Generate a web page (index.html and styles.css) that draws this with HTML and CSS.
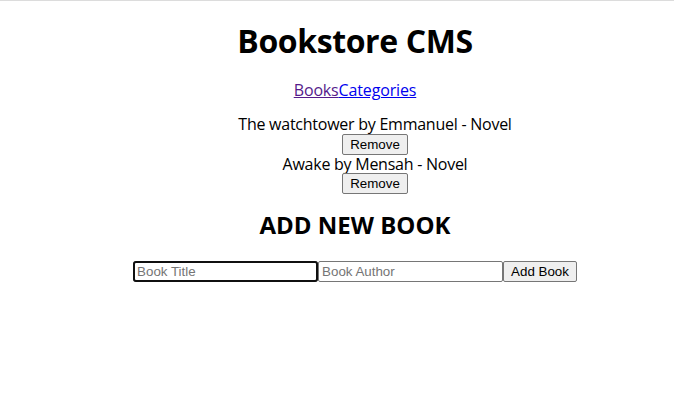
FILE: index.html
```html
<!DOCTYPE html>
<html lang="en">
<head>
<meta charset="utf-8">
<title>Bookstore CMS</title>
<link rel="stylesheet" href="styles.css">
</head>
<body>
<div class="app">
  <h1 class="title">Bookstore CMS</h1>
  <nav class="nav"><a class="nav-link visited" href="#books">Books</a><a class="nav-link" href="#categories">Categories</a></nav>
  <ul class="book-list">
    <li class="book">
      <span class="book-text">The watchtower by Emmanuel - Novel</span>
      <button class="btn" type="button">Remove</button>
    </li>
    <li class="book">
      <span class="book-text">Awake by Mensah - Novel</span>
      <button class="btn" type="button">Remove</button>
    </li>
  </ul>
  <h2 class="form-title">ADD NEW BOOK</h2>
  <form class="add-form"><input class="field" type="text" placeholder="Book Title" autofocus><input class="field" type="text" placeholder="Book Author"><button class="btn" type="submit">Add Book</button></form>
</div>
</body>
</html>
```

FILE: styles.css
```css
html {
  border-top: 1px solid #dcdcdc;
}

body {
  margin: 8px;
  font-family: "Open Sans", "Noto Sans", sans-serif;
  font-size: 16px;
  line-height: 1.15;
  color: #000;
  background: #fff;
}

.app {
  padding-left: 36px;
  text-align: center;
}

.title {
  font-size: 32px;
  font-weight: 700;
  letter-spacing: -0.4px;
  margin: 14px 0 21px;
}

.nav {
  letter-spacing: -0.15px;
}

.nav-link {
  color: #0000ee;
}

.nav-link.visited {
  color: #551a8b;
}

.book-list {
  list-style: none;
  margin: 16px 0 15px;
  padding-left: 40px;
}

.book {
  display: flex;
  flex-direction: column;
  align-items: center;
}

.book-text {
  letter-spacing: -0.25px;
}

.btn {
  box-sizing: border-box;
  height: 21px;
  font: 13.333px "Liberation Sans", Arial, sans-serif;
  color: #000;
  background: #efefef;
  border: 1px solid #767676;
  border-radius: 2px;
  padding: 1px 7px;
  margin: 0;
}

.form-title {
  font-size: 24px;
  font-weight: 700;
  margin: 17px 0 22px;
}

.add-form {
  display: block;
}

.field {
  box-sizing: border-box;
  width: 185px;
  height: 21px;
  font: 13.333px "Liberation Sans", Arial, sans-serif;
  padding: 1px 3px;
  border: 1px solid #767676;
  border-radius: 2px;
  margin: 0;
  vertical-align: baseline;
}

.field::placeholder {
  color: #757575;
}

.field:focus {
  outline: 2px solid #101010;
  outline-offset: -2px;
  border-radius: 3px;
}
```
